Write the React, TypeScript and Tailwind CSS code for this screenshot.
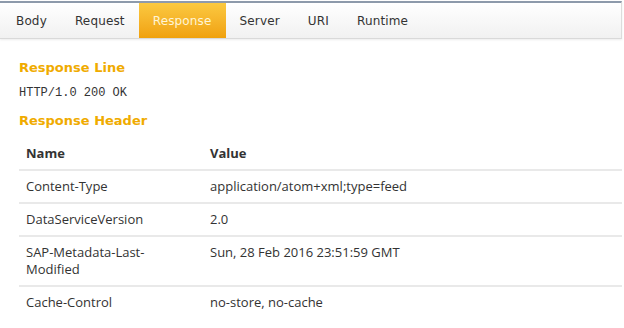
import React from 'react';

const tabs = ['Body', 'Request', 'Response', 'Server', 'URI', 'Runtime'];

const rows: { name: string; value: string }[] = [
  { name: 'Content-Type', value: 'application/atom+xml;type=feed' },
  { name: 'DataServiceVersion', value: '2.0' },
  { name: 'SAP-Metadata-Last-Modified', value: 'Sun, 28 Feb 2016 23:51:59 GMT' },
  { name: 'Cache-Control', value: 'no-store, no-cache' },
];

const App: React.FC = () => {
  return (
    <div className="w-[624px] h-[328px] bg-white overflow-hidden">
      <div className="mt-px w-[622px] border-t-2 border-[#8d9aab] border-b border-r border-b-[#d9d9d9] border-r-[#dcdcdc] bg-gradient-to-b from-white to-[#f1f1f1] shadow-[0_1px_2px_rgba(0,0,0,0.08)]">
        <nav className="flex h-[35px] pl-[2px] font-['DejaVu_Sans',sans-serif] text-[12px] tracking-[0.15px] text-[#333]">
          {tabs.map((t) => (
            <div
              key={t}
              className={
                t === 'Response'
                  ? 'flex items-center px-[14px] bg-gradient-to-b from-[#fbc93f] to-[#f0a10a] text-[#fff5d6]'
                  : 'flex items-center px-[14px]'
              }
            >
              {t}
            </div>
          ))}
        </nav>
      </div>

      <div className="pl-[19px] pr-[2px]">
        <h2 className="mt-[20px] font-['DejaVu_Sans',sans-serif] font-bold text-[13px] leading-[18px] text-[#f0ab00]">
          Response Line
        </h2>
        <p className="mt-[9px] font-['Liberation_Mono',monospace] text-[12px] leading-[14px] text-[#333]">
          HTTP/1.0 200 OK
        </p>
        <h2 className="mt-[12px] font-['DejaVu_Sans',sans-serif] font-bold text-[13px] leading-[18px] text-[#f0ab00]">
          Response Header
        </h2>

        <table className="mt-[5px] w-[603px] font-['Open_Sans',sans-serif] text-[13px] leading-[17px] text-[#333] border-collapse">
          <thead>
            <tr className="border-b-2 border-[#e9e9e9]">
              <th className="w-[191px] text-left font-bold pl-[7px] pt-[10px] pb-[7px] align-top">Name</th>
              <th className="text-left font-bold pt-[10px] pb-[7px] align-top">Value</th>
            </tr>
          </thead>
          <tbody>
            {rows.map((r, i) => (
              <tr key={r.name} className={i < rows.length - 1 ? 'border-b-2 border-[#e9e9e9]' : ''}>
                <td className="pl-[7px] pr-[20px] pt-[7px] pb-[7px] align-top font-normal">
                  {r.name === 'SAP-Metadata-Last-Modified' ? (
                    <>
                      SAP-Metadata-Last-
                      <br />
                      Modified
                    </>
                  ) : (
                    r.name
                  )}
                </td>
                <td className="pt-[7px] pb-[7px] align-top">{r.value}</td>
              </tr>
            ))}
          </tbody>
        </table>
      </div>
    </div>
  );
};

export default App;
